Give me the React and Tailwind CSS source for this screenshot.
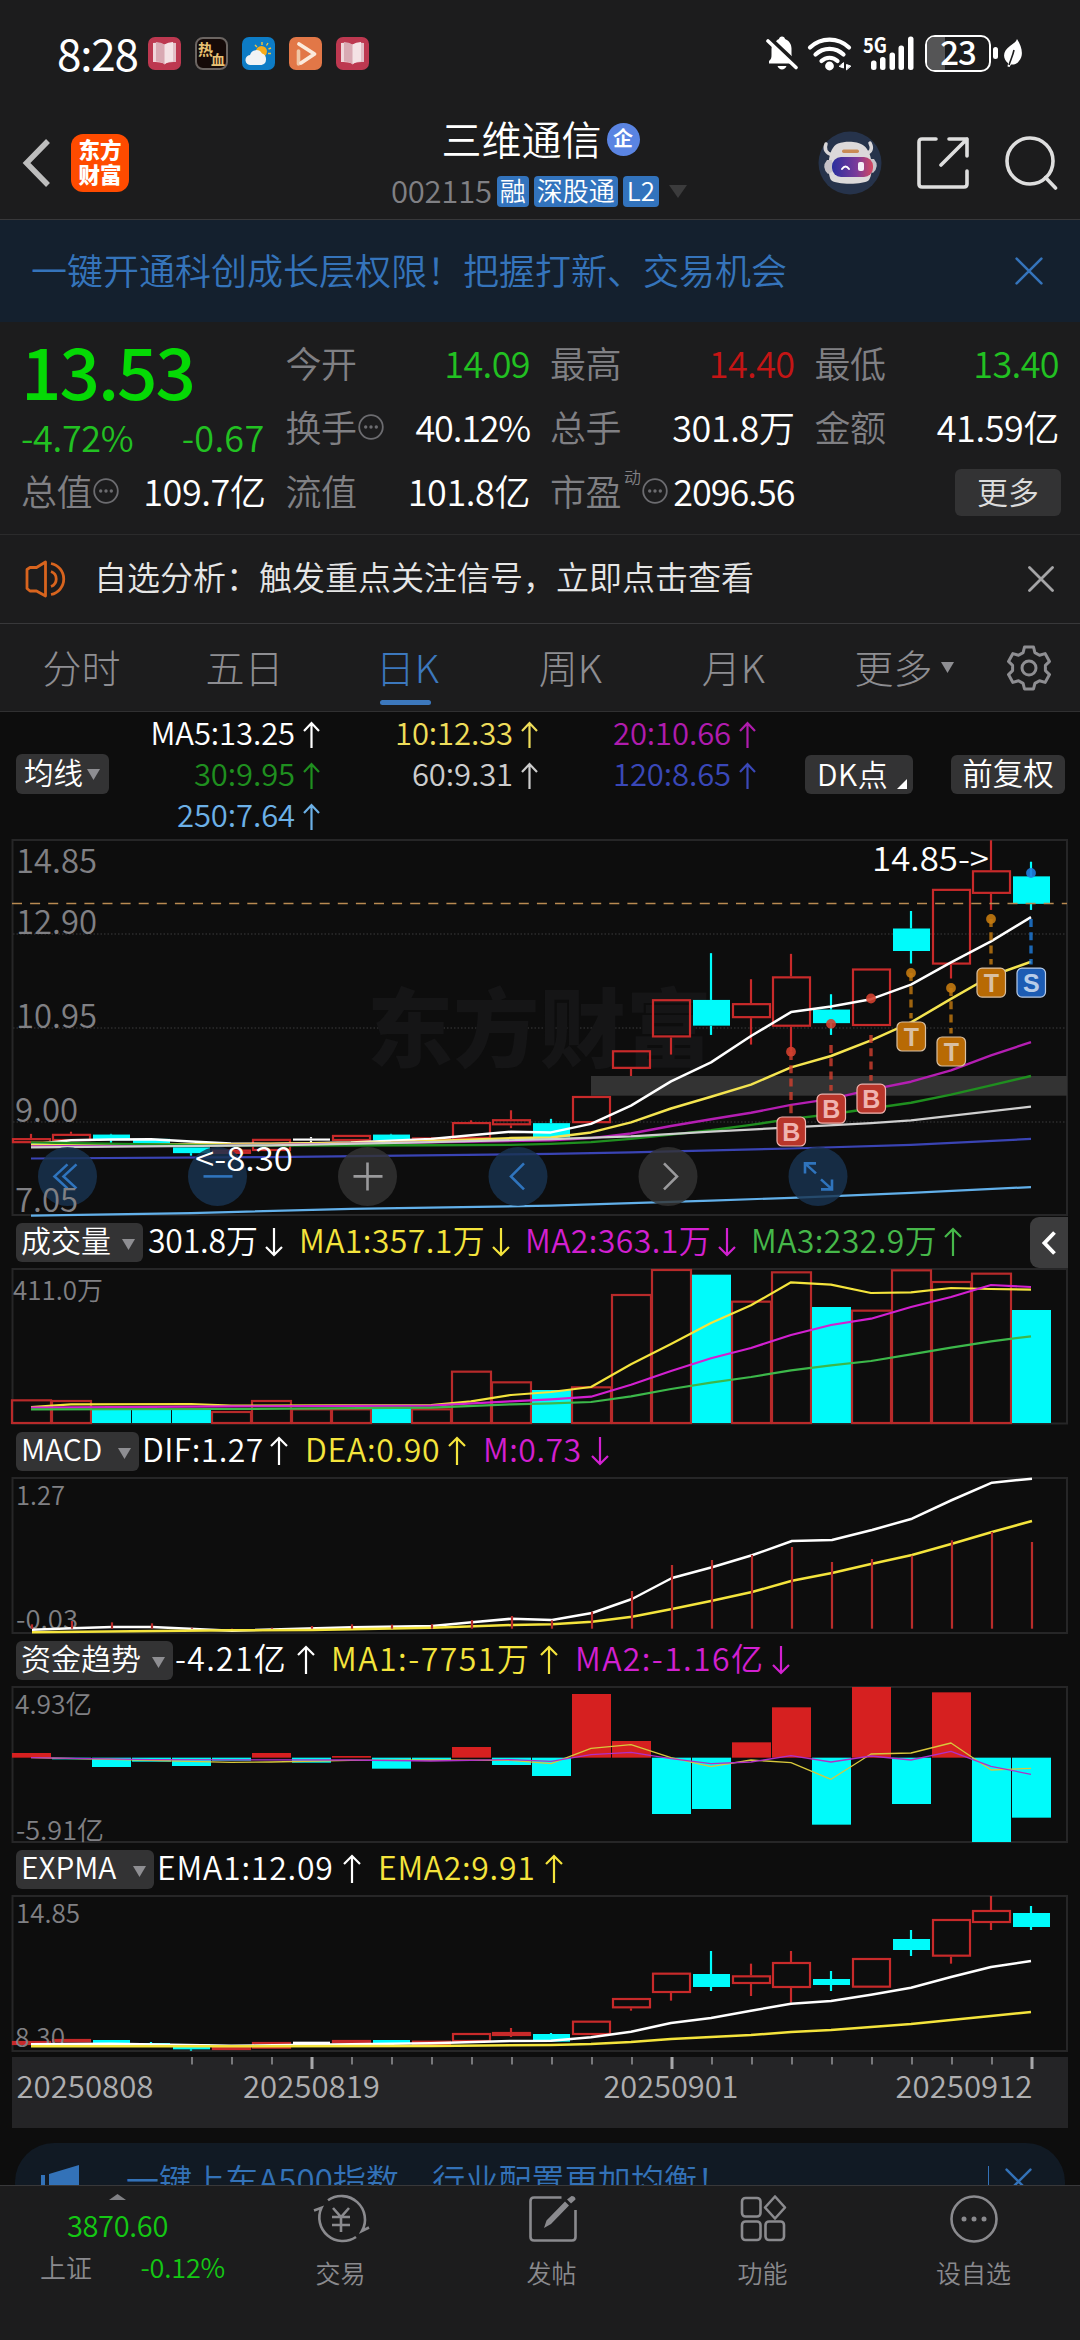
import React from "react";

const RED = "#c82a2a";
const CYAN = "#00fbfb";
const GRAY = "#808084";

const cx = (i) => 31 + i * 40;

/* Turns sparse [index, value] pairs into an SVG points string. */
const pts = (list, conv, dx = 0) => list.map(([i, v]) => `${cx(i) + dx},${conv(v).toFixed(1)}`).join(" ");
const seq = (start, values) => values.map((v, k) => [start + k, v]);

const main = (v) => 700 + v / 2.8;
const vol = (v) => 1210 + v / 3;
const low = (v) => 1630 + v / 3;

/* index, kind, body top, body bottom, high, low */
const PRICE = [
  [0, "r", 1224, 1238, 1212, 1238],
  [1, "r", 1212, 1232, 1206, 1232],
  [2, "c", 1214, 1230, 1212, 1237],
  [3, "c", 1226, 1238, 1226, 1238],
  [4, "c", 1250, 1266, 1250, 1273],
  [5, "r", 1256, 1268, 1256, 1268],
  [6, "r", 1226, 1260, 1226, 1260],
  [7, "w", 1225, 1231, 1221, 1236],
  [8, "r", 1215, 1232, 1215, 1232],
  [9, "c", 1214, 1230, 1212, 1230],
  [10, "r", 1222, 1231, 1222, 1231],
  [11, "r", 1179, 1226, 1174, 1226],
  [12, "r", 1171, 1188, 1146, 1196],
  [13, "c", 1182, 1222, 1170, 1222],
  [14, "r", 1106, 1182, 1106, 1182],
  [15, "r", 978, 1030, 978, 1050],
  [16, "r", 835, 942, 835, 990],
  [17, "c", 837, 909, 706, 935],
  [18, "r", 846, 888, 779, 962],
  [19, "r", 771, 912, 708, 982],
  [20, "c", 864, 902, 821, 935],
  [21, "r", 749, 910, 749, 910],
  [22, "c", 637, 700, 588, 735],
  [23, "r", 526, 738, 526, 777],
  [24, "r", 474, 540, 390, 585],
  [25, "c", 491, 568, 450, 585],
];

const EXPMA = [
  [0, "r", 1230, 1242, 1230, 1242],
  [1, "r", 1224, 1234, 1224, 1234],
  [2, "c", 1227, 1238, 1227, 1238],
  [3, "c", 1236, 1242, 1233, 1242],
  [4, "c", 1239, 1255, 1239, 1259],
  [5, "r", 1246, 1257, 1246, 1257],
  [6, "r", 1233, 1253, 1233, 1253],
  [7, "w", 1232, 1239, 1232, 1239],
  [8, "r", 1227, 1237, 1227, 1237],
  [9, "c", 1227, 1237, 1227, 1237],
  [10, "r", 1229, 1242, 1229, 1242],
  [11, "r", 1206, 1233, 1206, 1233],
  [12, "r", 1203, 1215, 1191, 1218],
  [13, "c", 1209, 1232, 1206, 1232],
  [14, "r", 1169, 1212, 1169, 1212],
  [15, "r", 1101, 1132, 1101, 1139],
  [16, "r", 1025, 1086, 1025, 1109],
  [17, "c", 1029, 1068, 960, 1080],
  [18, "r", 1033, 1059, 998, 1095],
  [19, "r", 993, 1071, 960, 1115],
  [20, "c", 1044, 1062, 1020, 1080],
  [21, "r", 981, 1070, 981, 1070],
  [22, "c", 924, 957, 897, 975],
  [23, "r", 864, 977, 864, 998],
  [24, "r", 837, 876, 795, 897],
  [25, "c", 846, 888, 825, 897],
];

const VOLUME = [
  ["r", 565], ["r", 567], ["c", 597], ["c", 597], ["c", 597], ["r", 600], ["r", 567], ["r", 592], ["r", 592],
  ["c", 592], ["r", 592], ["r", 479], ["r", 511], ["c", 537], ["r", 526], ["r", 249], ["r", 174], ["c", 191],
  ["r", 269], ["r", 181], ["c", 288], ["r", 296], ["r", 175], ["r", 210], ["r", 185], ["c", 297],
];

const MACD = [
  1240, 1230, 1234, 1237, 1250, 1252, 1250, 1245, 1240, 1241, 1240, 1227, 1215, 1228, 1202, 1140, 1062, 1047, 1032,
  1008, 1053, 1044, 1034, 988, 963, 993,
];

const FUND = [
  366, 385, 408, 392, 405, 389, 366, 395, 375, 413, 389, 348, 402, 435, 189, 330, 549, 534, 334, 229, 581, 168, 519,
  184, 633, 560,
];

const LINES = {
  ma5: [[0, 1242], [1, 1230], [2, 1228], [3, 1227], [4, 1233], [5, 1239], [6, 1240], [8, 1236], [10, 1226], [11, 1216], ...seq(12, [1206, 1208, 1184, 1133, 1065, 1012, 938, 871, 855, 835, 794, 732, 673, 605])],
  ma10: [[0, 1243], [5, 1241], [9, 1236], [12, 1224], ...seq(13, [1222, 1208, 1180, 1141, 1108, 1074, 1026, 994, 950, 900, 834, 770, 730])],
  ma20: [[0, 1247], [6, 1243], [10, 1236], [13, 1230], ...seq(14, [1224, 1211, 1190, 1171, 1153, 1131, 1114, 1088, 1066, 1034, 992, 955])],
  ma30: [[0, 1236], [5, 1245], [10, 1244], [12, 1243], ...seq(13, [1240, 1235, 1226, 1214, 1202, 1187, 1170, 1157, 1141, 1125, 1102, 1076, 1050])],
  ma60: [[0, 1250], [6, 1244], [10, 1235], [13, 1227], [15, 1219], [17, 1206], [19, 1194], [21, 1182], [22, 1174], [25, 1136]],
  ma120: [[0, 1281], [6, 1277], [13, 1268], [15, 1264], [19, 1253], [22, 1243], [25, 1226]],
  ma250: [[0, 1441], [4, 1434], [8, 1422], [13, 1413], [17, 1399], [19, 1391], [22, 1377], [25, 1361]],
};

function Candle({ d: [i, kind, top, bottom, high, lowest], conv }) {
  const x = cx(i);
  const color = kind === "r" ? RED : kind === "c" ? CYAN : "#ffffff";
  const t = conv(top);
  const b = conv(bottom);
  return (
    <g stroke={color} strokeWidth="2.200">
      {high < top && <line x1={x} x2={x} y1={conv(high)} y2={t} />}
      {lowest > bottom && <line x1={x} x2={x} y1={b} y2={conv(lowest)} />}
      {kind === "r" ? (
        <rect x={x - 18} y={t + 1} width="37" height={Math.max(b - t - 2, 1)} fill="none" />
      ) : (
        <rect x={x - 18} y={t} width="37" height={b - t} fill={color} stroke="none" />
      )}
    </g>
  );
}

function Line({ data, conv, color, w = 2.2, dx = 0 }) {
  return <polyline points={pts(data, conv, dx)} fill="none" stroke={color} strokeWidth={w} strokeLinejoin="round" />;
}

function Frame({ top, height, children }) {
  return (
    <svg width="1080" height={height} viewBox={`0 ${top} 1080 ${height}`} className="block shrink-0 overflow-visible">
      {children}
    </svg>
  );
}

function Border({ y, h }) {
  return <rect x="12.5" y={y} width="1054.5" height={h} fill="none" stroke="#262627" strokeWidth="2" />;
}

function Axis({ x, y, w, size = 26, color = GRAY, children }) {
  return (
    <text x={x} y={y} fontSize={size} fill={color} textLength={w} lengthAdjust="spacingAndGlyphs">
      {children}
    </text>
  );
}

function Marker({ i, y, letter, dot, from }) {
  const x = cx(i);
  const color = { B: "#b8352a", T: "#b86a04", S: "#1c5cb4" }[letter];
  const dotColor = { B: "#d2402f", T: "#c47a10", S: "#1f7ee0" }[letter];
  const ink = { B: "#f0b4b0", T: "#d8c0a4", S: "#b8cce8" }[letter];
  return (
    <g>
      <line x1={x} x2={x} y1={from} y2={y - 18} stroke={dotColor} strokeWidth="3.4" strokeDasharray="8 5.3" opacity="0.8" />
      <circle cx={x} cy={dot} r="4.9" fill={dotColor} opacity="0.9" />
      <rect x={x - 14} y={y - 14.5} width="28.5" height="29" rx="5" fill={color} stroke={ink} strokeWidth="1.2" />
      <text x={x + 0.3} y={y + 9} fontSize="25" fontWeight="700" fill={ink} textAnchor="middle" fontFamily="Liberation Sans, Arial, sans-serif">
        {letter}
      </text>
    </g>
  );
}

function Arrow({ down }) {
  return (
    <svg width="18" height="30" viewBox="0 0 18 30" className={down ? "shrink-0 rotate-180" : "shrink-0"} fill="none" stroke="currentColor" strokeWidth="2.200">
      <path d="M9 29V2M1 10l8-8 8 8" />
    </svg>
  );
}

function Tri({ className = "" }) {
  return (
    <svg width="13" height="11" viewBox="0 0 13 11" className={className} fill="currentColor">
      <path d="M0 0h13L6.5 11z" />
    </svg>
  );
}

function Close({ size, w = 2.4 }) {
  return (
    <svg width={size} height={size} viewBox="0 0 26 26" fill="none" stroke="currentColor" strokeWidth={w} strokeLinecap="round">
      <path d="M1.5 1.5l23 23M24.5 1.5l-23 23" />
    </svg>
  );
}

function Legend({ name, nameClass, items }) {
  return (
    <div className="flex h-[54px] shrink-0 items-center pl-4 text-[32px] leading-none">
      <div className={`flex h-[39px] items-center justify-between rounded-md bg-[#333334] pl-[5px] pr-2 text-[30px] text-white ${nameClass}`}>
        <span className="-mt-[6px] whitespace-nowrap">{name}</span>
        <Tri className="mt-1 text-[#8e8e92]" />
      </div>
      {items.map(([text, cls, down], k) => (
        <div key={k} className={`flex items-center justify-between ${cls}`}>
          <span className="-mt-[7px] whitespace-nowrap">{text}</span>
          <Arrow down={down} />
        </div>
      ))}
    </div>
  );
}

function Info() {
  return (
    <svg width="26" height="26" viewBox="0 0 26 26" className="shrink-0" fill="none" stroke="#6c6c70" strokeWidth="1.8">
      <circle cx="13" cy="13" r="11.8" />
      <g fill="#6c6c70" stroke="none">
        <circle cx="7.7" cy="13" r="1.7" />
        <circle cx="13" cy="13" r="1.7" />
        <circle cx="18.3" cy="13" r="1.7" />
      </g>
    </svg>
  );
}

function Quote({ label, value, sup, info, cls = "tracking-[-0.400px] text-white" }) {
  return (
    <div className="flex h-16 items-center justify-between">
      <div className="flex items-center text-[#808084]">
        <span className="-ml-px tracking-[-0.500px]">{label}</span>
        {sup && <span className="mb-7 ml-[3px] text-[17px]">{sup}</span>}
        {info && <span className="ml-px mt-[1px]"><Info /></span>}
      </div>
      <span className={`-mr-px whitespace-nowrap ${cls}`}>{value}</span>
    </div>
  );
}

function BookIcon() {
  return (
    <svg width="33" height="33" viewBox="0 0 33 33">
      <rect width="33" height="33" rx="7" fill="#bd3850" />
      <path d="M5 6q6-1 11.500 1.500v19q-5-2-11.500-1.500z" fill="#f0d5da" />
      <path d="M28 6q-6-1-11.500 1.500v19q5-2 11.500-1.500z" fill="#e3bec6" />
      <path d="M8 5q5 0 8.500 2.500v20q-3-3-8.500-3z" fill="#d9a9b3" />
      <path d="M25 5q-5 0-8.500 2.500v20q3-3 8.500-3z" fill="#f4e2e5" />
    </svg>
  );
}

function StatusBar() {
  return (
    <div className="flex h-[106px] shrink-0 items-center pl-[57px] pr-[57px] text-white">
      <span className="-mt-[3px] w-[91px] text-[44px] leading-none tracking-[-1.200px] font-normal">8:28</span>
      <div className="flex items-center gap-[14px]">
        <BookIcon />
        <div className="flex size-[33px] items-center justify-center rounded-lg border-2 border-[#6b6562] bg-[#150a08] text-[15px] font-bold leading-none text-[#e8c274]">
          <span className="-mr-0.5 mb-[10px]">热</span>
          <span className="mt-[11px] text-[14px]">血</span>
        </div>
        <svg width="33" height="33" viewBox="0 0 33 33">
          <rect width="33" height="33" rx="7" fill="#0d7cc6" />
          <g stroke="#f3c33c" strokeWidth="1.4">
            <path d="M20 5v3M26 6l-1.500 2.500M29 11l-2.500 1M29 16.500h-3M13 8l2 2" />
          </g>
          <circle cx="19.500" cy="14.500" r="5.500" fill="#f6ac1c" />
          <path d="M9 28a5 5 0 0 1-1-10 6.500 6.500 0 0 1 12-1.500A6 6 0 0 1 19.500 28z" fill="#f1f3f5" />
        </svg>
        <svg width="33" height="33" viewBox="0 0 33 33">
          <rect width="33" height="33" rx="7" fill="#e27747" />
          <path d="M9.500 14v13" stroke="#f0c7a6" strokeWidth="3.600" strokeLinecap="round" />
          <path d="M10 7l15.500 10L12 26" fill="none" stroke="#fbeadc" strokeWidth="3.800" strokeLinecap="round" strokeLinejoin="round" />
        </svg>
        <BookIcon />
      </div>
      <div className="ml-auto flex items-center">
        <svg width="32" height="36" viewBox="0 0 32 36" fill="#fff">
          <path d="M3 28.500V26c2-1.500 2.500-3 2.500-6v-6c0-1.500.3-3 1-4.200L27 28.500zM10 6.200C11 5 12 4.300 13 3.900 13.300 2.500 14.300 1.500 16 1.500s2.800 1 3 2.400c4 1.500 6.500 5 6.500 9.600v5c0 1 .1 2 .4 2.800zM11.500 31h9c-.8 2.300-2.500 3.500-4.500 3.500s-3.700-1.200-4.500-3.500z" />
          <path d="M2 6l28 26.500" stroke="#fff" strokeWidth="3.600" strokeLinecap="round" />
        </svg>
        <svg width="46" height="36" viewBox="0 0 46 36" className="ml-[9px]" fill="none" stroke="#fff" strokeWidth="4.200" strokeLinecap="round">
          <path d="M3 12.500a28 28 0 0 1 39 0" />
          <path d="M8.500 19.500a20 20 0 0 1 28 0" />
          <path d="M14.500 26a11.500 11.500 0 0 1 16 0" />
          <circle cx="22.500" cy="31" r="2.300" fill="#fff" />
          <path d="M36.500 28v5l-4-1.500zM39.500 34.500v-5l4 1.500z" fill="#fff" stroke="#fff" strokeWidth="1" />
        </svg>
        <svg width="53" height="36" viewBox="0 0 53 36" className="ml-[10px] overflow-visible" fill="#fff">
          <text x="0" y="18" fontSize="21" fontWeight="700" textLength="24" lengthAdjust="spacingAndGlyphs">5G</text>
          <rect x="8" y="25.500" width="5.500" height="9.500" rx="2.500" />
          <rect x="17" y="22" width="5.500" height="13" rx="2.500" />
          <rect x="26.500" y="17.500" width="5.500" height="17.500" rx="2.500" />
          <rect x="35.500" y="10.500" width="5.500" height="24.500" rx="2.500" />
          <rect x="45" y="1.500" width="5.500" height="33.500" rx="2.500" />
        </svg>
        <div className="relative ml-[9px] flex h-[37px] w-[66px] items-center justify-center rounded-[10px] border-[2.500px] border-white">
          <div className="absolute inset-y-0 left-0 w-[18px] rounded-l-[7px] bg-[#555556]" />
          <span className="relative -mt-[4px] text-[33px] leading-none tracking-[-1px] font-medium">23</span>
        </div>
        <div className="ml-0.5 h-3 w-[5px] rounded-sm bg-white" />
        <svg width="20" height="30" viewBox="0 0 20 30" className="ml-[5px]" fill="#fff">
          <path d="M14 1c5 8 7 16 2 22-2 3-5 4-8 3.500L6.500 29l-2-.5.6-3.300C-1 20 0 13 7 8c4-3 6-4 7-7z" />
          <path d="M11 12c-1 5-3 9-5 15" stroke="#1c1c1d" strokeWidth="1.600" fill="none" />
        </svg>
      </div>
    </div>
  );
}

function Header() {
  return (
    <div className="relative flex h-[114px] shrink-0 border-b border-[#38383a]">
      <div className="flex h-[114px] items-center gap-[20px] pl-[22px]">
        <svg width="29" height="50" viewBox="0 0 29 50" fill="none" stroke="#bdbdbd" strokeWidth="5.500">
          <path d="M26 3L4.500 25 26 47" />
        </svg>
        <div className="flex size-[58px] flex-col items-center justify-center rounded-[12px] bg-[#ff4b00] pb-[4px] text-[21.500px] font-black leading-[25px] text-white">
          <span>东方</span>
          <span>财富</span>
        </div>
      </div>
      <div className="absolute inset-x-0 top-0 flex flex-col items-center">
        <div className="flex h-[66px] items-center gap-[5px] pl-[1px]">
          <span className="-mt-[3px] text-[40px] leading-none text-white">三维通信</span>
          <div className="flex size-[33px] items-center justify-center rounded-full bg-[#5a84e2] pb-[2px] text-[20px] font-bold leading-none text-white">企</div>
        </div>
        <div className="-mt-px flex h-[40px] items-center gap-[5px] pr-[2px] text-[26px] leading-none">
          <span className="-mt-[4px] text-[31px] tracking-[-0.200px] text-[#808084]">002115</span>
          <span className="flex h-[31px] items-center rounded bg-[#3273bd] px-[3px] pb-[3px] text-white">融</span>
          <span className="flex h-[31px] items-center rounded bg-[#3273bd] px-[3px] pb-[3px] text-white">深股通</span>
          <span className="flex h-[31px] items-center rounded bg-[#3273bd] px-[4px] pb-[3px] text-white">L2</span>
          <svg width="18" height="13" viewBox="0 0 18 13" className="ml-[5px]" fill="#3b3b3c">
            <path d="M0 0h18L9 13z" />
          </svg>
        </div>
      </div>
      <div className="ml-auto flex h-[113px] items-center pr-[22px]">
        <svg width="64" height="64" viewBox="0 0 64 64">
          <circle cx="32" cy="32" r="31.500" fill="#26334b" />
          <path d="M8 13q-3 8 6 11M52 12q4 8-4 11" stroke="#d8d6d8" strokeWidth="3.500" fill="none" strokeLinecap="round" />
          <path d="M13 49C9 42 9 17 20 12.500c8-3 20-2 24 1C55 19 56 42 51 49c-5 5-33 5-38 0z" fill="#dcd9da" />
          <path d="M9 29q-6 7 1 14l4-2V29zM56 28q6 7-1 14l-4-2V28z" fill="#c6c2c8" />
          <rect x="24" y="18.500" width="17" height="3.500" rx="1.700" fill="#c98c55" />
          <defs>
            <linearGradient id="visor">
              <stop offset="0" stopColor="#2a2f9e" />
              <stop offset="0.600" stopColor="#7a3a9a" />
              <stop offset="1" stopColor="#d4485f" />
            </linearGradient>
          </defs>
          <rect x="14" y="26" width="41" height="20" rx="9" fill="url(#visor)" />
          <path d="M24 38q3.500-5 7 0" stroke="#fff" strokeWidth="2" fill="none" strokeLinecap="round" />
          <rect x="40" y="31" width="6" height="9" rx="2" fill="#f4eef6" />
        </svg>
        <svg width="52" height="54" viewBox="0 0 52 54" className="ml-[35px]" fill="none" stroke="#dedede" strokeWidth="3.600" strokeLinecap="round" strokeLinejoin="round">
          <path d="M19 3H5Q2 3 2 6v42q0 3 3 3h42q3 0 3-3V35M32 3h18v17M50 3L24 29" />
        </svg>
        <svg width="54" height="56" viewBox="0 0 54 56" className="ml-[35px]" fill="none" stroke="#dedede" strokeWidth="3.600" strokeLinecap="round">
          <circle cx="26" cy="26" r="23" />
          <path d="M41.500 42.500L51.500 53" />
        </svg>
      </div>
    </div>
  );
}

function QuotePanel() {
  return (
    <div className="relative grid h-[213px] shrink-0 grid-cols-4 content-start gap-x-[22px] border-b border-[#2b2b2c] px-[22px] pt-[8px] text-[36px] leading-none">
      <div className="flex flex-col">
        <div className="-mt-[3px] mb-[3px] flex h-[84px] items-center text-[71px] font-medium tracking-[-2px] text-[#05d905]">
          <span className="-ml-[1px]">13.53</span>
        </div>
        <div className="flex h-[44px] items-center justify-between text-[#22c122]">
          <span className="-ml-px tracking-[-0.300px]">-4.72%</span>
          <span className="tracking-[0.300px]">-0.67</span>
        </div>
        <Quote label="总值" value="109.7亿" info />
      </div>
      <div>
        <Quote label="今开" value="14.09" cls="tracking-[-0.600px] text-[#22c122]" />
        <Quote label="换手" value="40.12%" cls="tracking-[-1.200px] text-white" info />
        <Quote label="流值" value="101.8亿" />
      </div>
      <div>
        <Quote label="最高" value="14.40" cls="tracking-[-0.600px] text-[#c41515]" />
        <Quote label="总手" value="301.8万" />
        <Quote label="市盈" value="2096.56" sup="动" cls="tracking-[-1px] text-white" info />
      </div>
      <div>
        <Quote label="最低" value="13.40" cls="tracking-[-0.600px] text-[#22c122]" />
        <Quote label="金额" value="41.59亿" />
        <div className="flex h-16 items-center justify-end">
          <div className="-mr-[3px] mt-[5px] flex h-[47px] w-[106px] items-center justify-center rounded-md bg-[#333334] pb-[5px] text-[31px] text-[#dcdcdc]">更多</div>
        </div>
      </div>
    </div>
  );
}

function Tabs() {
  return (
    <div className="flex h-[88px] shrink-0 items-center border-b border-[#303031] text-[39px] font-light leading-none text-[#8e8e92]">
      {["分时", "五日", "日K", "周K", "月K"].map((t) => (
        <div key={t} className={t === "日K" ? "relative flex h-[88px] w-[163px] items-center justify-center pb-[2px] text-[#3c78bd]" : "flex w-[163px] justify-center pb-[2px]"}>
          {t}
          {t === "日K" && <div className="absolute bottom-[7px] left-[54px] h-[5px] w-[51px] rounded-full bg-[#3c78bd]" />}
        </div>
      ))}
      <div className="flex w-[178px] items-center justify-center gap-[8px]">
        <span className="-mt-[2px]">更多</span>
        <Tri />
      </div>
      <svg width="46" height="46" viewBox="0 0 46 46" className="ml-[13px]" fill="none" stroke="currentColor" strokeWidth="3" strokeLinejoin="round">
        <path d="M18.500 2h9l1.400 5.600 4.600 2.700 5.600-1.700 4.400 7.800-4.100 4v5.200l4.100 4-4.400 7.800-5.600-1.700-4.600 2.700L27.500 44h-9l-1.400-5.600-4.600-2.700-5.600 1.700-4.400-7.800 4.100-4v-5.200l-4.100-4 4.400-7.800 5.600 1.700 4.600-2.700z" />
        <circle cx="23" cy="23" r="7" />
      </svg>
    </div>
  );
}

function MaCell({ text, cls }) {
  return (
    <div className={`flex h-[41px] items-center justify-end gap-[8px] ${cls}`}>
      <span className="-mt-[6px]">{text}</span>
      <svg width="17" height="27" viewBox="0 0 17 27" fill="none" stroke="currentColor" strokeWidth="2.200">
        <path d="M8.500 27V2M1 10l7.500-8L16 10" />
      </svg>
    </div>
  );
}

function MaLegend() {
  return (
    <div className="flex h-[126px] shrink-0 items-start pl-4 pt-[2px] text-[31px] leading-none">
      <div className="mt-[40px] flex h-[40px] w-[93px] items-center justify-between rounded-md bg-[#333334] pl-[8px] pr-[9px] text-[29.500px] text-white">
        <span className="-mt-[4px]">均线</span>
        <Tri className="text-[#8e8e92]" />
      </div>
      <div className="grid w-[647px] grid-cols-[211px_218px_218px] tracking-[-0.100px]">
        <MaCell text="MA5:13.25" cls="text-white" />
        <MaCell text="10:12.33" cls="text-[#eedd5a]" />
        <MaCell text="20:10.66" cls="text-[#b01cae]" />
        <MaCell text="30:9.95" cls="text-[#1f8f1f]" />
        <MaCell text="60:9.31" cls="text-[#cccccc]" />
        <MaCell text="120:8.65" cls="text-[#3a48b8]" />
        <MaCell text="250:7.64" cls="text-[#6cb0e6]" />
      </div>
      <div className="relative ml-[49px] mt-[41px] flex h-[39px] w-[108px] items-center rounded-md bg-[#333334] pb-[4px] pl-[12px] text-[30px] tracking-[0.500px] text-white">
        DK点
        <svg width="10" height="10" viewBox="0 0 10 10" className="absolute bottom-[5px] right-[6px]" fill="#fff">
          <path d="M10 0v10H0z" />
        </svg>
      </div>
      <div className="ml-[38px] mt-[41px] flex h-[39px] w-[114px] items-center justify-center rounded-md bg-[#333334] pb-[4px] text-[30.500px] text-white">前复权</div>
    </div>
  );
}

function RoundButton({ x, blue, children }) {
  return (
    <g>
      <circle cx={x} cy="1175.400" r="29.500" fill={blue ? "#193350" : "#333333"} opacity="0.82" />
      <g fill="none" stroke={blue ? "#2f74bd" : "#9a9a9c"} strokeWidth="2.600" transform={`translate(${x} 1175.400)`}>
        {children}
      </g>
    </g>
  );
}

function PriceChart() {
  return (
    <Frame top={837} height={378}>
      <Border y={839} h={375} />
      <g stroke="#2c2c2d" strokeWidth="1.500" strokeDasharray="1.500 2">
        <path d="M13 933h1054M13 1027h1054M13 1121h1054" />
      </g>
      <text x="367" y="1060" fontSize="86" fontWeight="900" fill="#151516" textLength="345">东方财富</text>
      <rect x="591" y="1075" width="476" height="19.700" fill="#333333" />
      {PRICE.map((d) => (
        <Candle key={d[0]} d={d} conv={main} />
      ))}
      <path d="M12 902.500h1055" stroke="#b98a52" strokeWidth="1.300" strokeDasharray="10 8.100" />
      <Line data={LINES.ma250} conv={main} color="#62b0ea" />
      <Line data={LINES.ma120} conv={main} color="#3a44b4" />
      <Line data={LINES.ma5} conv={main} color="#ffffff" w={2.5} />
      <Line data={LINES.ma10} conv={main} color="#f4e450" w={2.5} />
      <Line data={LINES.ma20} conv={main} color="#b41eb2" w={2.4} />
      <Line data={LINES.ma30} conv={main} color="#1f8f1f" w={2.4} />
      <Line data={LINES.ma60} conv={main} color="#cfcfcf" />
      <RoundButton x={67.5} blue><path d="M0-12L-13 0 0 12M9-12L-4 0 9 12" /></RoundButton>
      <RoundButton x={217.5} blue><path d="M-14 0h29" /></RoundButton>
      <RoundButton x={367.5}><path d="M-14 0h29M0-14v28" /></RoundButton>
      <RoundButton x={518} blue><path d="M6-13L-7 0 6 13" /></RoundButton>
      <RoundButton x={668}><path d="M-4-13L9 0-4 13" /></RoundButton>
      <RoundButton x={818} blue><path d="M-2-3L-13-13M-13-3V-13H-2M3 3L14 13M14 3V13H3" /></RoundButton>
      <Axis x="16" y="872" w="81" size="33">14.85</Axis>
      <Axis x="16" y="932.500" w="81" size="33">12.90</Axis>
      <Axis x="16" y="1026.500" w="81" size="33">10.95</Axis>
      <Axis x="15" y="1120.500" w="63" size="33">9.00</Axis>
      <Axis x="15" y="1210.500" w="63" size="33">7.05</Axis>
      <Axis x="195" y="1169.500" w="98" size="33" color="#ffffff">{"<-8.30"}</Axis>
      <Axis x="872" y="869.500" w="117" size="33" color="#ffffff">{"14.85->"}</Axis>
      <Marker i={19} y={1130.5} letter="B" dot={1050.7} from={1051} />
      <Marker i={20} y={1107.7} letter="B" dot={1022.9} from={1044} />
      <Marker i={21} y={1097.7} letter="B" dot={997.5} from={1034} />
      <Marker i={22} y={1035.5} letter="T" dot={972} from={972} />
      <Marker i={23} y={1050.5} letter="T" dot={987} from={987} />
      <Marker i={24} y={981.6} letter="T" dot={918} from={918} />
      <Marker i={25} y={981.6} letter="S" dot={872} from={918} />
    </Frame>
  );
}

function VolumeChart() {
  const yellow = [[0, 588], [1, 580], [4, 579], [5, 584], [10, 582], [11, 571], ...seq(12, [552, 543, 528, 460, 399, 336, 283, 214, 221, 246, 244, 231, 234, 236])];
  const magenta = [[0, 590], [5, 586], [10, 584], [12, 571], ...seq(13, [565, 557, 521, 480, 442, 411, 372, 342, 323, 288, 258, 222, 228])];
  const green = [[0, 595], [5, 594], [10, 590], [12, 580], ...seq(13, [577, 573, 556, 534, 515, 498, 478, 463, 450, 430, 410, 391, 376])];
  return (
    <Frame top={1267} height={157}>
      <Border y={1268} h={154.5} />
      <Axis x="13" y="1299" w="90">411.0万</Axis>
      {VOLUME.map(([kind, v], i) =>
        kind === "r" ? (
          <rect key={i} x={cx(i) - 19} y={vol(v) + 1} width="39" height={1421 - vol(v)} fill="none" stroke="#b82a2a" strokeWidth="2.200" />
        ) : (
          <rect key={i} x={cx(i) - 19} y={vol(v)} width="39" height={1422 - vol(v)} fill={CYAN} />
        )
      )}
      <Line data={yellow} conv={vol} color="#f4e43c" />
      <Line data={magenta} conv={vol} color="#d220d0" />
      <Line data={green} conv={vol} color="#3cb84a" />
    </Frame>
  );
}

function MacdChart() {
  const dif = [[0, 1256], [1, 1252], [2, 1248], [3, 1248], [5, 1259], [8, 1249], [10, 1245], ...seq(11, [1234, 1223, 1227, 1206, 1164, 1101, 1069, 1033, 990, 987, 957, 923, 867, 815, 803])];
  const dea = [[0, 1264], [5, 1258], [7, 1257], [10, 1250], [12, 1242], ...seq(13, [1240, 1232, 1217, 1194, 1169, 1143, 1109, 1086, 1058, 1032, 998, 963, 930])];
  return (
    <Frame top={1476} height={157}>
      <Border y={1477} h={155} />
      <Axis x="16" y="1504" w="49">1.27</Axis>
      <Axis x="16" y="1628" w="62">-0.03</Axis>
      <Line data={dif} conv={vol} color="#ffffff" w={2.5} dx={1} />
      <Line data={dea} conv={vol} color="#f4e43c" w={2.5} dx={1} />
      {MACD.map((v, i) => (
        <line key={i} x1={cx(i) + 1} x2={cx(i) + 1} y1={vol(v)} y2="1627.700" stroke="#b82c2a" strokeWidth="2.200" />
      ))}
    </Frame>
  );
}

function FundChart() {
  const yellow = [[0, 380], [2, 385], [4, 391], [5, 394], [6, 393], [8, 388], [10, 387], [12, 388], ...seq(13, [398, 352, 341, 380, 407, 387, 395, 445, 369, 366, 336, 417, 412])];
  const magenta = [[0, 380], [3, 386], [8, 387], [10, 390], [12, 386], ...seq(13, [391, 371, 364, 383, 398, 393, 374, 393, 375, 387, 361, 406, 430])];
  return (
    <Frame top={1685} height={157}>
      <Border y={1686} h={155} />
      <Axis x="15" y="1713" w="77">4.93亿</Axis>
      <Axis x="16" y="1839" w="88">-5.91亿</Axis>
      {FUND.map((v, i) => (
        <rect key={i} x={cx(i) - 19} y={Math.min(low(v), low(380))} width="39" height={Math.abs(low(v) - low(380))} fill={v < 380 ? "#d62020" : CYAN} />
      ))}
      <Line data={yellow} conv={low} color="#d8c83c" w={1.3} />
      <Line data={magenta} conv={low} color="#b030c8" w={1.3} />
    </Frame>
  );
}

function ExpmaChart() {
  const ema1 = [[0, 1240], [2, 1238], [5, 1244], [8, 1240], [10, 1237], [12, 1230], ...seq(13, [1229, 1219, 1202, 1176, 1161, 1139, 1118, 1110, 1091, 1070, 1038, 1008, 990])];
  const ema2 = [[0, 1246], [10, 1245], ...seq(13, [1242, 1239, 1233, 1224, 1218, 1212, 1203, 1197, 1188, 1179, 1167, 1155, 1143])];
  return (
    <Frame top={1894} height={157}>
      <Border y={1895} h={155} />
      {EXPMA.map((d) => (
        <Candle key={d[0]} d={d} conv={low} />
      ))}
      <Axis x="16" y="1922" w="64">14.85</Axis>
      <Axis x="15" y="2045.500" w="50">8.30</Axis>
      <Line data={ema1} conv={low} color="#ffffff" w={2.5} />
      <Line data={ema2} conv={low} color="#f4e43c" w={2.5} />
    </Frame>
  );
}

function DateAxis() {
  return (
    <Frame top={2051} height={91}>
      <rect x="12" y="2056" width="1056" height="71" fill="#242426" />
      {Array.from({ length: 22 }, (_, k) => k + 4).map((i) => {
        const major = i === 7 || i === 16 || i === 25;
        return <line key={i} x1={cx(i) + 1} x2={cx(i) + 1} y1="2056" y2={major ? 2068 : 2063.5} stroke={major ? "#a8a8aa" : "#77777a"} strokeWidth={major ? 3 : 2} />;
      })}
      <Axis x="16.500" y="2096.700" w="137" size="30.500" color="#aeaeb0">20250808</Axis>
      <Axis x="243" y="2096.700" w="137" size="30.500" color="#aeaeb0">20250819</Axis>
      <Axis x="603.500" y="2096.700" w="135" size="30.500" color="#aeaeb0">20250901</Axis>
      <Axis x="895.500" y="2096.700" w="137" size="30.500" color="#aeaeb0">20250912</Axis>
    </Frame>
  );
}

function BottomNav() {
  const items = [
    ["交易", <><path d="M15 5.300A23.500 23.500 0 0 1 49 36L56 32.500M43 42A23.500 23.500 0 0 1 8.500 12.700L1 15.500" /><path d="M20 13L28 22l8-9M28 22v15M19 22h18M19 30h18" /></>],
    ["发帖", <><path d="M37.500 2.500H10Q6.500 2.500 6.500 6v36q0 3.500 3.500 3.500h38q3.500 0 3.500-3.500V15" /><path d="M20 33l2.500-7.500L41 6.500l4 4L27 29zM43 4.500L47.500 1q4 0 4 3.500L47 8.500z" fill="currentColor" stroke="none" /></>],
    ["功能", <><rect x="7" y="3" width="18.500" height="18.500" rx="3.500" /><rect x="7" y="26.500" width="18.500" height="18.500" rx="3.500" /><rect x="30.500" y="26.500" width="18.500" height="18.500" rx="3.500" /><path d="M40 1.500L50 12.500 40 23.500 30 12.500z" strokeLinejoin="round" /></>],
    ["设自选", <><circle cx="28" cy="24" r="22.500" /><g fill="currentColor" stroke="none"><circle cx="18" cy="24" r="2.500" /><circle cx="28" cy="24" r="2.500" /><circle cx="38" cy="24" r="2.500" /></g></>],
  ];
  return (
    <div className="flex h-[156px] shrink-0 border-t border-[#38383a] bg-[#1c1c1d] leading-none">
      <div className="flex w-[235px] flex-col items-center pt-[8px]">
        <svg width="17" height="6" viewBox="0 0 17 6" fill="#808084">
          <path d="M8.500 0L17 6H0z" />
        </svg>
        <span className="mt-[10px] text-[29px] tracking-[-0.300px] text-[#14c814]">3870.60</span>
        <div className="mt-[14px] flex w-full items-center justify-between pl-[40px] pr-[10px]">
          <span className="text-[26px] text-[#8a8a8e]">上证</span>
          <span className="text-[27px] tracking-[-0.200px] text-[#14c814]">-0.12%</span>
        </div>
      </div>
      {items.map(([label, icon]) => (
        <div key={label} className="flex w-[211px] flex-col items-center pt-[9px] text-[25px] text-[#8a8a8e]">
          <svg width="56" height="48" viewBox="0 0 56 48" className="overflow-visible" fill="none" stroke="currentColor" strokeWidth="2.600">
            {icon}
          </svg>
          <span className="mt-[17px]">{label}</span>
        </div>
      ))}
    </div>
  );
}

export default function App() {
  return (
    <div className="flex h-[2340px] w-[1080px] flex-col overflow-hidden bg-[#0d0d0d] font-['Noto_Sans_CJK_SC',sans-serif] font-[350]">
      <div className="flex shrink-0 flex-col bg-[#1c1c1d]">
        <StatusBar />
        <Header />
        <div className="flex h-[102px] shrink-0 items-center justify-between bg-[#14202e] pl-[31px] pr-[37px] text-[36px] leading-none text-[#3574bb]">
          <span className="-mt-[4px]">一键开通科创成长层权限！把握打新、交易机会</span>
          <Close size={28} />
        </div>
        <QuotePanel />
        <div className="flex h-[89px] shrink-0 items-center border-b border-[#38383a] pl-[25px] pr-[26px] text-[33px] leading-none text-[#e6e6e6]">
          <svg width="44" height="38" viewBox="0 0 44 38" fill="none" stroke="#d8641e" strokeWidth="2.800" strokeLinejoin="round">
            <path d="M2 9.500L5 7.500h6.500L20.500 2v34L11.500 31H5L2 28.500z" />
            <path d="M26 3.500a15.800 15.800 0 0 1 0 31M26 11.500a8 8 0 0 1 0 15" />
          </svg>
          <span className="-mt-[5px] ml-[25px]">自选分析：触发重点关注信号，立即点击查看</span>
          <div className="ml-auto text-[#a4a4a6]">
            <Close size={26} w={2.8} />
          </div>
        </div>
        <Tabs />
      </div>
      <MaLegend />
      <PriceChart />
      <div className="relative -mt-px">
        <Legend
          name="成交量"
          nameClass="w-[127px]"
          items={[
            ["301.8万", "ml-[5px] w-[135px] tracking-[-0.200px] text-white", true],
            ["MA1:357.1万", "ml-[16px] w-[211px] tracking-[0.400px] text-[#f4e43c]", true],
            ["MA2:363.1万", "ml-[15px] w-[211px] tracking-[0.400px] text-[#d220d0]", true],
            ["MA3:232.9万", "ml-[15px] w-[211px] tracking-[0.400px] text-[#46b84a]", false],
          ]}
        />
        <div className="absolute right-[12px] top-[2px] flex h-[51px] w-[38px] items-center justify-center rounded-l-[9px] bg-[#3c3c3d]">
          <svg width="14" height="24" viewBox="0 0 14 24" fill="none" stroke="#fff" strokeWidth="3.800">
            <path d="M12.500 1.500L2.500 12l10 10.500" />
          </svg>
        </div>
      </div>
      <div className="-mt-px"><VolumeChart /></div>
      <div className="-mt-px">
        <Legend
          name="MACD"
          nameClass="w-[123px]"
          items={[
            ["DIF:1.27", "ml-[3px] w-[146px] tracking-[0.400px] text-white", false],
            ["DEA:0.90", "ml-[17px] w-[161px] tracking-[0.700px] text-[#f4e43c]", false],
            ["M:0.73", "ml-[17px] w-[126px] tracking-[0.500px] text-[#d220d0]", true],
          ]}
        />
      </div>
      <div className="-mt-px"><MacdChart /></div>
      <div className="-mt-px">
        <Legend
          name="资金趋势"
          nameClass="w-[157px]"
          items={[
            ["-4.21亿", "ml-[2px] w-[140px] tracking-[1.300px] text-white", false],
            ["MA1:-7751万", "ml-[16px] w-[227px] tracking-[1.500px] text-[#f4e43c]", false],
            ["MA2:-1.16亿", "ml-[17px] w-[215px] tracking-[1.400px] text-[#d220d0]", true],
          ]}
        />
      </div>
      <div className="-mt-px"><FundChart /></div>
      <div className="-mt-px">
        <Legend
          name="EXPMA"
          nameClass="w-[138px]"
          items={[
            ["EMA1:12.09", "ml-[3px] w-[204px] tracking-[0.800px] text-white", false],
            ["EMA2:9.91", "ml-[17px] w-[185px] tracking-[0.700px] text-[#f4e43c]", false],
          ]}
        />
      </div>
      <div className="-mt-px"><ExpmaChart /></div>
      <DateAxis />
      <div className="h-[42px] shrink-0 overflow-hidden px-[15px]">
        <div className="flex h-[78px] items-center rounded-[42px] bg-[#111a24] pl-[26px] pr-[33px] text-[33px] leading-none text-[#3372b8]">
          <svg width="40" height="34" viewBox="0 0 40 34" fill="currentColor">
            <path d="M0 10h4v16H0zM8 9L38 0v34L8 27z" />
          </svg>
          <span className="-mt-[6px] ml-[45px] tracking-[0.100px]">一键上车A500指数，行业配置更加均衡！</span>
          <div className="ml-auto h-8 w-px bg-current" />
          <div className="-mt-px ml-[16px]">
            <Close size={27} />
          </div>
        </div>
      </div>
      <BottomNav />
    </div>
  );
}
